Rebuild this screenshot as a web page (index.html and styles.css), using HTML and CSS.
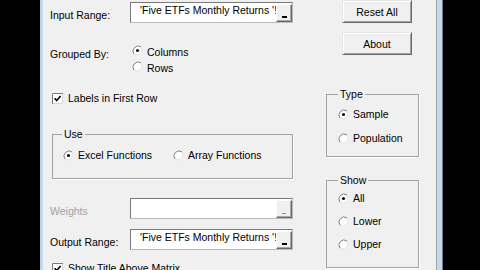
FILE: index.html
```html
<!DOCTYPE html>
<html>
<head>
<meta charset="utf-8">
<link rel="stylesheet" href="styles.css">
</head>
<body>
<div class="screen">
  <div class="edge-l"></div>
  <div class="dialog">
    <div class="col-left">
      <div class="row row-input">
        <span class="lbl">Input Range:</span>
        <div class="field"><span class="val">'Five ETFs Monthly Returns '!</span><span class="pick"></span></div>
      </div>
      <div class="row row-group">
        <span class="lbl lbl-group">Grouped By:</span>
        <div class="stack stack-group">
          <div class="opt opt-top">
            <svg class="rb" viewBox="0 0 11 11"><circle cx="5.5" cy="5.5" r="5" fill="#fff"/><path d="M9 2A5 5 0 0 0 2 9" fill="none" stroke="#7b7b7b"/><path d="M2 9A5 5 0 0 0 9 2" fill="none" stroke="#dedede"/><circle cx="5.5" cy="5.5" r="1.6" fill="#111"/></svg>
            <span>Columns</span>
          </div>
          <div class="opt opt-top">
            <svg class="rb" viewBox="0 0 11 11"><circle cx="5.5" cy="5.5" r="5" fill="#fff"/><path d="M9 2A5 5 0 0 0 2 9" fill="none" stroke="#7b7b7b"/><path d="M2 9A5 5 0 0 0 9 2" fill="none" stroke="#dedede"/></svg>
            <span>Rows</span>
          </div>
        </div>
      </div>
      <div class="check check-labels">
        <svg class="cb" viewBox="0 0 11 11"><rect x="0" y="0" width="11" height="11" fill="#fff"/><path d="M0.5 11V0.5H11" fill="none" stroke="#7a7a7a"/><path d="M10.5 1V10.5H1" fill="none" stroke="#d8d8d8"/><path d="M2.6 5.2l2.1 2.3 3.9-4.6" fill="none" stroke="#000" stroke-width="1.6"/></svg>
        <span>Labels in First Row</span>
      </div>
      <fieldset class="group group-use">
        <legend>Use</legend>
        <div class="inline">
          <div class="opt opt-excel">
            <svg class="rb" viewBox="0 0 11 11"><circle cx="5.5" cy="5.5" r="5" fill="#fff"/><path d="M9 2A5 5 0 0 0 2 9" fill="none" stroke="#7b7b7b"/><path d="M2 9A5 5 0 0 0 9 2" fill="none" stroke="#dedede"/><circle cx="5.5" cy="5.5" r="1.6" fill="#111"/></svg>
            <span>Excel Functions</span>
          </div>
          <div class="opt">
            <svg class="rb" viewBox="0 0 11 11"><circle cx="5.5" cy="5.5" r="5" fill="#fff"/><path d="M9 2A5 5 0 0 0 2 9" fill="none" stroke="#7b7b7b"/><path d="M2 9A5 5 0 0 0 9 2" fill="none" stroke="#dedede"/></svg>
            <span>Array Functions</span>
          </div>
        </div>
      </fieldset>
      <div class="row row-weights">
        <span class="lbl lbl-disabled">Weights</span>
        <div class="field"><span class="val"></span><span class="pick pick-disabled"></span></div>
      </div>
      <div class="row row-output">
        <span class="lbl">Output Range:</span>
        <div class="field"><span class="val">'Five ETFs Monthly Returns '!</span><span class="pick"></span></div>
      </div>
      <div class="check check-title">
        <svg class="cb" viewBox="0 0 11 11"><rect x="0" y="0" width="11" height="11" fill="#fff"/><path d="M0.5 11V0.5H11" fill="none" stroke="#7a7a7a"/><path d="M10.5 1V10.5H1" fill="none" stroke="#d8d8d8"/><path d="M2.6 5.2l2.1 2.3 3.9-4.6" fill="none" stroke="#000" stroke-width="1.6"/></svg>
        <span>Show Title Above Matrix</span>
      </div>
    </div>
    <div class="col-right">
      <button class="btn btn-reset">Reset All</button>
      <button class="btn btn-about">About</button>
      <fieldset class="group group-type">
        <legend>Type</legend>
        <div class="stack stack-type">
          <div class="opt">
            <svg class="rb" viewBox="0 0 11 11"><circle cx="5.5" cy="5.5" r="5" fill="#fff"/><path d="M9 2A5 5 0 0 0 2 9" fill="none" stroke="#7b7b7b"/><path d="M2 9A5 5 0 0 0 9 2" fill="none" stroke="#dedede"/><circle cx="5.5" cy="5.5" r="1.6" fill="#111"/></svg>
            <span>Sample</span>
          </div>
          <div class="opt">
            <svg class="rb" viewBox="0 0 11 11"><circle cx="5.5" cy="5.5" r="5" fill="#fff"/><path d="M9 2A5 5 0 0 0 2 9" fill="none" stroke="#7b7b7b"/><path d="M2 9A5 5 0 0 0 9 2" fill="none" stroke="#dedede"/></svg>
            <span>Population</span>
          </div>
        </div>
      </fieldset>
      <fieldset class="group group-show">
        <legend>Show</legend>
        <div class="stack stack-show">
          <div class="opt">
            <svg class="rb" viewBox="0 0 11 11"><circle cx="5.5" cy="5.5" r="5" fill="#fff"/><path d="M9 2A5 5 0 0 0 2 9" fill="none" stroke="#7b7b7b"/><path d="M2 9A5 5 0 0 0 9 2" fill="none" stroke="#dedede"/><circle cx="5.5" cy="5.5" r="1.6" fill="#111"/></svg>
            <span>All</span>
          </div>
          <div class="opt">
            <svg class="rb" viewBox="0 0 11 11"><circle cx="5.5" cy="5.5" r="5" fill="#fff"/><path d="M9 2A5 5 0 0 0 2 9" fill="none" stroke="#7b7b7b"/><path d="M2 9A5 5 0 0 0 9 2" fill="none" stroke="#dedede"/></svg>
            <span>Lower</span>
          </div>
          <div class="opt">
            <svg class="rb" viewBox="0 0 11 11"><circle cx="5.5" cy="5.5" r="5" fill="#fff"/><path d="M9 2A5 5 0 0 0 2 9" fill="none" stroke="#7b7b7b"/><path d="M2 9A5 5 0 0 0 9 2" fill="none" stroke="#dedede"/></svg>
            <span>Upper</span>
          </div>
        </div>
      </fieldset>
    </div>
  </div>
  <div class="edge-r"></div>
</div>
</body>
</html>
```
FILE: styles.css
```css
* { box-sizing: border-box; }
html, body { margin: 0; padding: 0; }
body {
  width: 480px;
  height: 270px;
  overflow: hidden;
  background: #000;
  font-family: "Liberation Sans", Arial, sans-serif;
  font-size: 10.5px;
  color: #000;
}
.screen { display: flex; height: 270px; padding-left: 40px; }
.edge-l { width: 3px; background: linear-gradient(90deg, #b7cbe2, #d2e0ef); }
.edge-r { width: 7px; background: linear-gradient(90deg, #a4a4a4 0 1px, #c6d7ea 1px 6px, #6f7c8a 6px 7px); }
.dialog { width: 393px; height: 270px; background: #f0f0f0; display: flex; overflow: hidden; }

.col-left { width: 283px; padding-left: 7px; display: flex; flex-direction: column; }
.col-right { width: 93px; display: flex; flex-direction: column; align-items: flex-start; }
.col-left > *, .col-right > * { flex-shrink: 0; }

.row { display: flex; align-items: flex-start; }
.lbl { width: 80px; line-height: 16px; padding-top: 5px; white-space: nowrap; }
.lbl-group { padding-top: 2px; }
.lbl-disabled { color: #a2a2a2; }

.row-input { margin-top: 2px; }
.row-group { margin-top: 21px; }
.row-weights { margin-top: 19px; }
.row-output { margin-top: 10px; }

.field {
  width: 163px;
  height: 21px;
  display: flex;
  background: #fff;
  border: 1px solid;
  border-color: #7a7a7a #b9b9b9 #b9b9b9 #7a7a7a;
}
.val { flex: 1; padding-left: 9px; line-height: 15px; white-space: nowrap; overflow: hidden; }
.pick {
  width: 16px;
  height: 18px;
  align-self: flex-end;
  background: #f0f0f0;
  border: 1px solid;
  border-color: #fcfcfc #6a6a6a #6a6a6a #fcfcfc;
  box-shadow: inset -1px -1px 0 #a8a8a8;
  display: flex;
  align-items: flex-end;
  justify-content: center;
}
.pick::after { content: ""; width: 5px; height: 2px; background: #000; margin-bottom: 3px; }
.pick-disabled::after { width: 4px; height: 1px; background: #8c8c8c; }

.stack { display: flex; flex-direction: column; }
.stack-group { margin-left: 2px; }
.opt { display: flex; align-items: center; gap: 4px; height: 16px; line-height: 16px; white-space: nowrap; }
.opt-top { align-items: flex-start; }
.opt-top .rb { margin-top: 1px; }
.rb { width: 11px; height: 11px; flex: none; }

.check { display: flex; align-items: flex-start; gap: 5px; line-height: 16px; margin-left: 2px; white-space: nowrap; }
.check .cb { width: 11px; height: 11px; margin-top: 3px; flex: none; }
.check-labels { margin-top: 14px; }
.check-title { margin-top: 10px; }

.group {
  margin: 0;
  padding: 0 0 0 9px;
  border: 1px solid #a3a3a3;
  box-shadow: 1px 1px 0 #fff;
  min-width: 0;
}
.group legend { padding: 0 2px; line-height: 12px; background: #f0f0f0; }
.group-use { width: 241px; height: 51px; margin: 22px 0 0 2px; }
.inline { display: flex; margin-top: 7px; margin-left: 1px; }
.opt-excel { width: 110px; }

.btn {
  font: inherit;
  color: #000;
  width: 70px;
  height: 23px;
  margin: 0 0 0 16px;
  padding: 0;
  background: #f0f0f0;
  border: 1px solid;
  border-color: #e6e6e6 #696969 #696969 #e6e6e6;
  box-shadow: inset 1px 1px 0 #fff, inset -1px -1px 0 #a0a0a0;
}
.btn-about { margin-top: 9px; }

.group-type { width: 93px; height: 69px; margin-top: 33px; padding-left: 11px; }
.stack-type { margin-top: 6px; gap: 8px; }
.group-show { width: 93px; height: 94px; margin-top: 17px; padding-left: 11px; }
.stack-show { margin-top: 4px; gap: 7px; }
```
